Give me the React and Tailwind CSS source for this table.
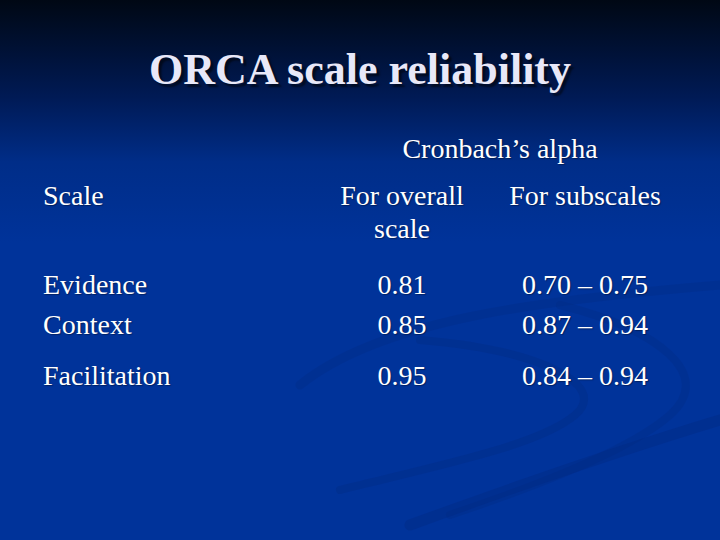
const rows = [
  { label: ['Evidence', 'Context'], overall: ['0.81', '0.85'], sub: ['0.70 – 0.75', '0.87 – 0.94'] },
]

function Swooshes() {
  return (
    <svg className="absolute inset-0 w-full h-full pointer-events-none" viewBox="0 0 720 540" fill="none">
      <path d="M300 385 C 380 320, 540 300, 720 285" stroke="#002a80" strokeOpacity="0.3" strokeWidth="9" strokeLinecap="round" />
      <path d="M420 340 C 540 350, 610 385, 575 415 C 540 445, 440 465, 340 490" stroke="#002a80" strokeOpacity="0.35" strokeWidth="8" strokeLinecap="round" />
      <path d="M560 305 C 660 330, 715 375, 670 415 C 630 450, 540 485, 450 515" stroke="#002a80" strokeOpacity="0.3" strokeWidth="8" strokeLinecap="round" />
      <path d="M720 420 C 620 450, 520 485, 410 525" stroke="#00297e" strokeOpacity="0.35" strokeWidth="11" strokeLinecap="round" />
    </svg>
  )
}

export default function App() {
  return (
    <div
      className="relative w-[720px] h-[540px] overflow-hidden bg-[linear-gradient(180deg,#000814_0%,#001a55_18%,#002d88_30%,#00339a_45%,#00339a_100%)]"
      style={{ fontFamily: '"Liberation Serif", "Times New Roman", serif' }}
    >
      <Swooshes />

      <div className="relative">
        {/* Title */}
        <h1 className="pt-[45px] text-center text-[44px] leading-[50px] font-bold text-[#e8e8f8] [text-shadow:3px_3px_2px_rgba(0,0,0,0.55)]">
          ORCA scale reliability
        </h1>

        {/* Table */}
        <div className="mt-[37px] pl-[43px] grid grid-cols-[287px_144px_222px] text-white text-[28px] leading-[33px] [text-shadow:1px_1px_1px_rgba(0,0,0,0.35)]">
          <div />
          <div className="col-span-2 text-center pr-[26px]">Cronbach’s alpha</div>

          <div className="mt-[14px]">Scale</div>
          <div className="mt-[14px] text-center">For overall<br />scale</div>
          <div className="mt-[14px] text-center">For subscales</div>

          {rows.map((r, i) => (
            <div key={i} className="contents">
              <div className="mt-[20px] leading-[40px]">{r.label.map((t) => <div key={t}>{t}</div>)}</div>
              <div className="mt-[20px] leading-[40px] text-center">{r.overall.map((t) => <div key={t}>{t}</div>)}</div>
              <div className="mt-[20px] leading-[40px] text-center">{r.sub.map((t) => <div key={t}>{t}</div>)}</div>
            </div>
          ))}

          <div className="mt-[14px]">Facilitation</div>
          <div className="mt-[14px] text-center">0.95</div>
          <div className="mt-[14px] text-center">0.84 – 0.94</div>
        </div>
      </div>
    </div>
  )
}
